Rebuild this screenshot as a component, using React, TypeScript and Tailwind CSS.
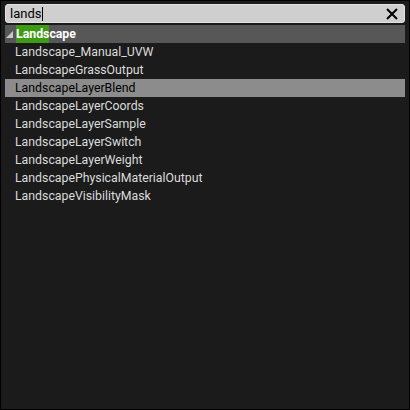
const ITEMS = [
  "Landscape_Manual_UVW",
  "LandscapeGrassOutput",
  "LandscapeLayerBlend",
  "LandscapeLayerCoords",
  "LandscapeLayerSample",
  "LandscapeLayerSwitch",
  "LandscapeLayerWeight",
  "LandscapePhysicalMaterialOutput",
  "LandscapeVisibilityMask",
];

const SELECTED = "LandscapeLayerBlend";

export default function App() {
  return (
    <div
      className="w-[410px] h-[410px] bg-[#1b1b1b] border border-black flex flex-col px-[4px] pt-[3px]"
      style={{ fontFamily: "Roboto, 'Liberation Sans', sans-serif" }}
    >
      {/* Search box */}
      <div className="h-[19px] rounded-[3px] bg-[#cfcfcf] border border-[#e2e2e2] flex items-center pl-[4px] pr-[5px]">
        <span className="text-[13px] text-black leading-none">lands</span>
        <span className="w-px h-[14px] bg-black ml-px" />
        <div className="flex-1" />
        <svg width="14" height="14" viewBox="0 0 14 14">
          <path d="M2 2 L12 12 M12 2 L2 12" stroke="#000" strokeWidth="2" />
        </svg>
      </div>

      {/* Category header */}
      <div className="mt-[2px] h-[18px] bg-[#575757] flex items-center">
        <svg width="9" height="10" viewBox="0 0 9 10" className="ml-[1px]">
          <path d="M7 2 L7 9 L0 9 Z" fill="#c8c8c8" />
        </svg>
        <span className="ml-[1px] text-[12.3px] font-bold text-white leading-none">
          <span className="bg-[#3f9b16] py-[2px]">Lands</span>cape
        </span>
      </div>

      {/* Items */}
      <div className="flex flex-col">
        {ITEMS.map((name) => {
          const sel = name === SELECTED;
          return (
            <div
              key={name}
              className={
                sel
                  ? "h-[18px] flex items-center pl-[10px] bg-[#8c8c8c] text-black text-[12.3px]"
                  : "h-[18px] flex items-center pl-[10px] text-[#dcdcdc] text-[12.3px]"
              }
            >
              {name}
            </div>
          );
        })}
      </div>
    </div>
  );
}
